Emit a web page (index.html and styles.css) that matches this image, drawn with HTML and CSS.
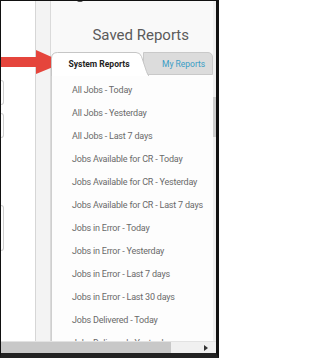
FILE: index.html
```html
<!DOCTYPE html>
<html>
<head>
<meta charset="utf-8">
<link rel="stylesheet" href="styles.css">
</head>
<body>
<div class="frame">
  <div class="screen">
    <div class="leftcol">
      <div class="stub stub-a"></div>
      <div class="stub stub-b"></div>
      <div class="stub stub-c"></div>
    </div>
    <div class="strip"></div>
    <div class="main">
      <div class="header"><h1 class="title">Saved Reports</h1></div>
      <div class="tabs">
        <div class="tab tab-active">
          <svg class="tab-shape" width="98" height="24" viewBox="0 0 98 24"><path d="M0.5 24 V6.5 Q0.5 0.5 6.5 0.5 H85 Q89 0.5 90.5 4.5 L95.5 19.5 Q97 23.5 98 24" fill="#ffffff" stroke="#c6c6c6" stroke-width="1"/></svg>
          <span class="tab-label">System Reports</span>
        </div>
        <div class="tab tab-other">
          <span class="tab-label">My Reports</span>
        </div>
      </div>
      <ul class="list">
        <li>All Jobs - Today</li>
        <li>All Jobs - Yesterday</li>
        <li>All Jobs - Last 7 days</li>
        <li>Jobs Available for CR - Today</li>
        <li>Jobs Available for CR - Yesterday</li>
        <li>Jobs Available for CR - Last 7 days</li>
        <li>Jobs in Error - Today</li>
        <li>Jobs in Error - Yesterday</li>
        <li>Jobs in Error - Last 7 days</li>
        <li>Jobs in Error - Last 30 days</li>
        <li>Jobs Delivered - Today</li>
        <li>Jobs Delivered - Yesterday</li>
      </ul>
    </div>
    <div class="vscroll"><div class="vthumb"></div></div>
  </div>
  <div class="hscroll">
    <div class="hthumb"></div>
    <div class="htrack"><span class="harrow"></span></div>
  </div>
  <svg class="arrow" width="66" height="28" viewBox="0 0 66 28">
    <polygon points="0,8 35,8 35,1 63,13.5 35,25 35,18 0,18" fill="#e5453c"/>
  </svg>
  <span class="topmark"></span>
</div>
</body>
</html>
```
FILE: styles.css
```css
* { box-sizing: border-box; }
html, body { margin: 0; padding: 0; background: #fff; }
body { width: 219px; height: 358px; overflow: hidden; font-family: Roboto, "Liberation Sans", sans-serif; }
.frame {
  position: relative;
  width: 219px;
  height: 358px;
  border-top: 1px solid #111;
  border-left: 1px solid #111;
  border-right: 3px solid #111;
  border-bottom: 5px solid #222;
  display: flex;
  flex-direction: column;
  background: #fff;
  overflow: hidden;
}
.screen { flex: 1 1 auto; display: flex; overflow: hidden; min-height: 0; }
.leftcol {
  flex: 0 0 35px;
  background: #fff;
  border-right: 1px solid #d6d6d6;
  display: flex;
  flex-direction: column;
}
.stub { flex: 0 0 auto; width: 3px; border: 1px solid #cfcfcf; border-left: none; border-radius: 0 3px 3px 0; }
.stub-a { margin-top: 79px; height: 25px; }
.stub-b { margin-top: 8px; height: 25px; }
.stub-c { margin-top: 67px; height: 46px; }
.strip { flex: 0 0 15px; background: #f3f3f3; border-right: 1px solid #dadada; }
.main { flex: 0 0 162px; display: flex; flex-direction: column; background: #f9f9f9; min-height: 0; }
.header { flex: 0 0 51px; display: flex; align-items: flex-end; justify-content: flex-end; padding: 0 24px 8px 0; }
.title { margin: 0; font-size: 15px; font-weight: 400; color: #5b5b5b; line-height: 17px; white-space: nowrap; }
.tabs { flex: 0 0 23px; display: flex; position: relative; }
.tab { position: relative; height: 23px; display: flex; align-items: center; }
.tab-active { flex: 0 0 97px; z-index: 2; justify-content: center; padding-right: 1px; }
.tab-shape { position: absolute; left: 0; top: 0; }
.tab-other {
  flex: 1 1 auto;
  margin-left: -5px;
  background: #dcdcdc;
  border: 1px solid #c9c9c9;
  border-radius: 0 5px 0 0;
  padding-left: 18px;
  z-index: 1;
}
.tab-label { position: relative; font-size: 8.5px; white-space: nowrap; }
.tab-active .tab-label { font-weight: 700; color: #222; margin-top: 1px; }
.tab-other .tab-label { color: #3a9cc5; }
.list {
  list-style: none;
  margin: 0;
  padding: 4px 0 0 20px;
  flex: 1 0 auto;
  background: #fdfdfd;
  border-left: 1px solid #cfcfcf;
}
.list li { height: 23px; line-height: 23px; font-size: 9px; letter-spacing: -0.2px; color: #6a6a6a; white-space: nowrap; }
.vscroll { flex: 0 0 3px; background: #efefef; position: relative; }
.vthumb { position: absolute; left: 0; top: 96px; width: 3px; height: 40px; background: #cdcdcd; }
.hscroll { flex: 0 0 12px; display: flex; background: #f0f0f0; border-top: 1px solid #e2e2e2; }
.hthumb { flex: 0 0 170px; background: #c8c8c8; }
.htrack { flex: 1 1 auto; position: relative; }
.harrow {
  position: absolute;
  right: 8px;
  top: 3px;
  width: 0;
  height: 0;
  border-top: 3px solid transparent;
  border-bottom: 3px solid transparent;
  border-left: 4px solid #333;
}
.arrow { position: absolute; left: 0; top: 48px; }
.topmark { position: absolute; left: 76px; top: -1px; width: 6px; height: 2px; background: #555; border-radius: 0 0 3px 3px; }
```
